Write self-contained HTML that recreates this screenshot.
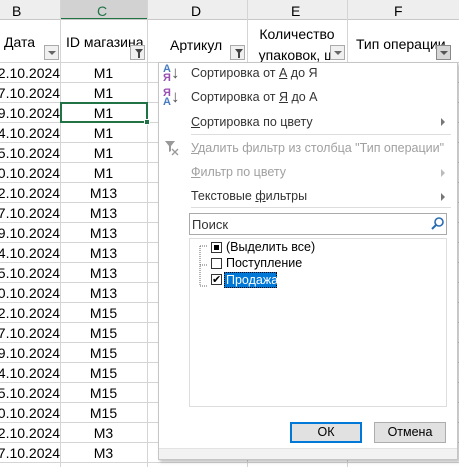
<!DOCTYPE html><html><head><meta charset="utf-8"><style>
*{margin:0;padding:0;box-sizing:border-box}
body{width:459px;height:467px;overflow:hidden;background:#fff;font-family:"Liberation Sans","DejaVu Sans",sans-serif;position:relative;font-size:14px;color:#000}
.a{position:absolute}
.hl{position:absolute;left:0;width:459px;height:1px;background:#d4d4d4}
.vl{position:absolute;top:0;width:1px;height:467px;background:#d4d4d4}
.mi{position:absolute;left:191px;font-size:12.5px;color:#333}
.dis{color:#a0a0a0}
.arr{position:absolute;left:441px;width:0;height:0;border-top:4px solid transparent;border-bottom:4px solid transparent;border-left:4px solid #777}
.fb{position:absolute;width:15px;height:15px;border:1px solid #aaa;background:#f0f0f0}
</style></head><body>
<div class="a" style="left:0;top:0;width:459px;height:20px;background:#eee"></div>
<div class="a" style="left:60px;top:0;width:87px;height:20px;background:#d2d2d2;border-bottom:2px solid #217346"></div>
<div class="a" style="left:0;top:19px;width:459px;height:1px;background:#c8c8c8"></div>
<div class="a" style="left:12px;top:3px;font-size:14px">B</div>
<div class="a" style="left:97px;top:3px;font-size:14px;color:#217346">C</div>
<div class="a" style="left:191px;top:3px;font-size:14px">D</div>
<div class="a" style="left:291px;top:3px;font-size:14px">E</div>
<div class="a" style="left:394px;top:3px;font-size:14px">F</div>
<div class="vl" style="left:60px"></div><div class="vl" style="left:147px"></div><div class="vl" style="left:247px"></div><div class="vl" style="left:347px"></div>
<div class="a" style="top:34px;left:4px">Дата</div>
<div class="a" style="left:66px;top:34px">ID магазина</div>
<div class="a" style="left:170px;top:37px">Артикул</div>
<div class="a" style="left:252px;top:24px;width:90px;text-align:center;line-height:21px">Количество упаковок, ш</div>
<div class="a" style="left:356px;top:36px">Тип операции</div>
<div class="fb" style="left:44px;top:45px"><div class="a" style="left:3px;top:5px;border-left:4px solid transparent;border-right:4px solid transparent;border-top:4px solid #666"></div></div>
<div class="fb" style="left:130px;top:45px"><div class="a" style="left:4px;top:3px;border-left:4px solid transparent;border-right:4px solid transparent;border-top:5px solid #444"></div><div class="a" style="left:7px;top:7px;width:2px;height:5px;background:#444"></div></div>
<div class="fb" style="left:230px;top:45px"><div class="a" style="left:4px;top:3px;border-left:4px solid transparent;border-right:4px solid transparent;border-top:5px solid #444"></div><div class="a" style="left:7px;top:7px;width:2px;height:5px;background:#444"></div></div>
<div class="fb" style="left:330px;top:45px"><div class="a" style="left:3px;top:5px;border-left:4px solid transparent;border-right:4px solid transparent;border-top:4px solid #666"></div></div>
<div class="fb" style="left:436px;top:45px;background:#d6d6d6;border-color:#888"><div class="a" style="left:3px;top:5px;border-left:4px solid transparent;border-right:4px solid transparent;border-top:4px solid #555"></div></div>
<div id="rows"></div>
<script>
var d=["02","07","09","14","15","20","02","07","09","14","15","20","02","07","09","14","15","20","02","07"];
var m=["M1","M1","M1","M1","M1","M1","M13","M13","M13","M13","M13","M13","M15","M15","M15","M15","M15","M15","M3","M3"];
var h="";for(var i=0;i<20;i++){var y=62+i*20;h+='<div class="hl" style="top:'+y+'px"></div><div class="a" style="left:-10px;top:'+(y+3)+'px;width:67px;text-align:right">'+d[i]+'.10.2024</div><div class="a" style="left:60px;top:'+(y+3)+'px;width:87px;text-align:center">'+m[i]+'</div>';}
h+='<div class="hl" style="top:462px"></div>';document.getElementById("rows").innerHTML=h;
</script>
<div class="a" style="left:60px;top:102px;width:88px;height:21px;border:2px solid #217346"></div>
<div class="a" style="left:144px;top:119px;width:6px;height:6px;background:#217346;border:1px solid #fff"></div>
<div class="a" style="left:158px;top:62px;width:300px;height:398px;background:#fff;border:1px solid #c6c6c6;box-shadow:2px 2px 3px rgba(0,0,0,.25)"></div>
<div class="a" style="left:163px;top:65px;font-size:11px;line-height:9px;font-weight:bold;color:#4a7cc0">А<br><span style="color:#9b4fb3">Я</span></div><div class="a" style="left:171px;top:63px;font-size:17px;color:#555">↓</div>
<div class="a" style="left:163px;top:89px;font-size:11px;line-height:9px;font-weight:bold;color:#9b4fb3">Я<br><span style="color:#4a7cc0">А</span></div><div class="a" style="left:171px;top:87px;font-size:17px;color:#555">↓</div>
<div class="mi" style="top:66px">Сортировка от <u>А</u> до Я</div>
<div class="mi" style="top:90px">Сортировка от <u>Я</u> до А</div>
<div class="mi" style="top:115px"><u>С</u>ортировка по цвету</div><div class="arr" style="top:118px"></div>
<div class="a" style="left:191px;top:134px;width:260px;height:1px;background:#ddd"></div>
<svg class="a" style="left:164px;top:140px" width="16" height="16"><path d="M1 1 H11 L7 6 V11 L5 12 V6 Z" fill="#999"/><path d="M8 9 L14 15 M14 9 L8 15" stroke="#999" stroke-width="1.3"/></svg>
<div class="mi dis" style="top:141px"><u>У</u>далить фильтр из столбца "Тип операции"</div>
<div class="mi dis" style="top:165px"><u>Ф</u>ильтр по цвету</div><div class="arr" style="top:169px;border-left-color:#bbb"></div>
<div class="mi" style="top:189px">Текстовые <u>ф</u>ильтры</div><div class="arr" style="top:193px"></div>
<div class="a" style="left:191px;top:207px;width:260px;height:1px;background:#ddd"></div>
<div class="a" style="left:189px;top:213px;width:258px;height:22px;border:1px solid #aaa"></div>
<div class="a" style="left:192px;top:217px;font-size:13px;color:#333">Поиск</div>
<svg class="a" style="left:431px;top:217px" width="13" height="13"><circle cx="8" cy="5" r="4" fill="none" stroke="#2b6cb0" stroke-width="1.6"/><path d="M5 8 L1 12" stroke="#2b6cb0" stroke-width="2"/></svg>
<div class="a" style="left:189px;top:238px;width:258px;height:169px;border:1px solid #ddd"></div>
<svg class="a" style="left:198px;top:242px" width="20" height="48"><path d="M2 4 H10 M2 4 V44 M2 23 H10 M2 44 H10" stroke="#666" stroke-dasharray="1 1" fill="none"/></svg>
<div class="a" style="left:211px;top:242px;width:11px;height:11px;border:1px solid #333;background:#fff"><div class="a" style="left:2px;top:2px;width:5px;height:5px;background:#000"></div></div>
<div class="a" style="left:226px;top:240px;font-size:12.5px">(Выделить все)</div>
<div class="a" style="left:211px;top:258px;width:11px;height:11px;border:1px solid #333;background:#fff"></div>
<div class="a" style="left:226px;top:256px;font-size:12.5px">Поступление</div>
<div class="a" style="left:211px;top:274px;width:11px;height:11px;border:1px solid #333;background:#fff;font-size:11px;line-height:10px;font-weight:bold">✔</div>
<div class="a" style="left:224px;top:272px;width:53px;height:16px;background:#0078d7;border:1px dotted #000;color:#fff;font-size:12.5px;padding-left:1px;white-space:nowrap">Продажа</div>
<div class="a" style="left:290px;top:422px;width:72px;height:21px;border:2px solid #0078d7;background:#e1e1e1;text-align:center;font-size:12.5px;line-height:17px">ОК</div>
<div class="a" style="left:374px;top:422px;width:72px;height:21px;border:1px solid #adadad;background:#e1e1e1;text-align:center;font-size:12.5px;line-height:19px">Отмена</div>
<div class="a" style="left:159px;top:448px;width:298px;height:11px;background:#f2f2f2;border-top:1px solid #e3e3e3"></div>
</body></html>
